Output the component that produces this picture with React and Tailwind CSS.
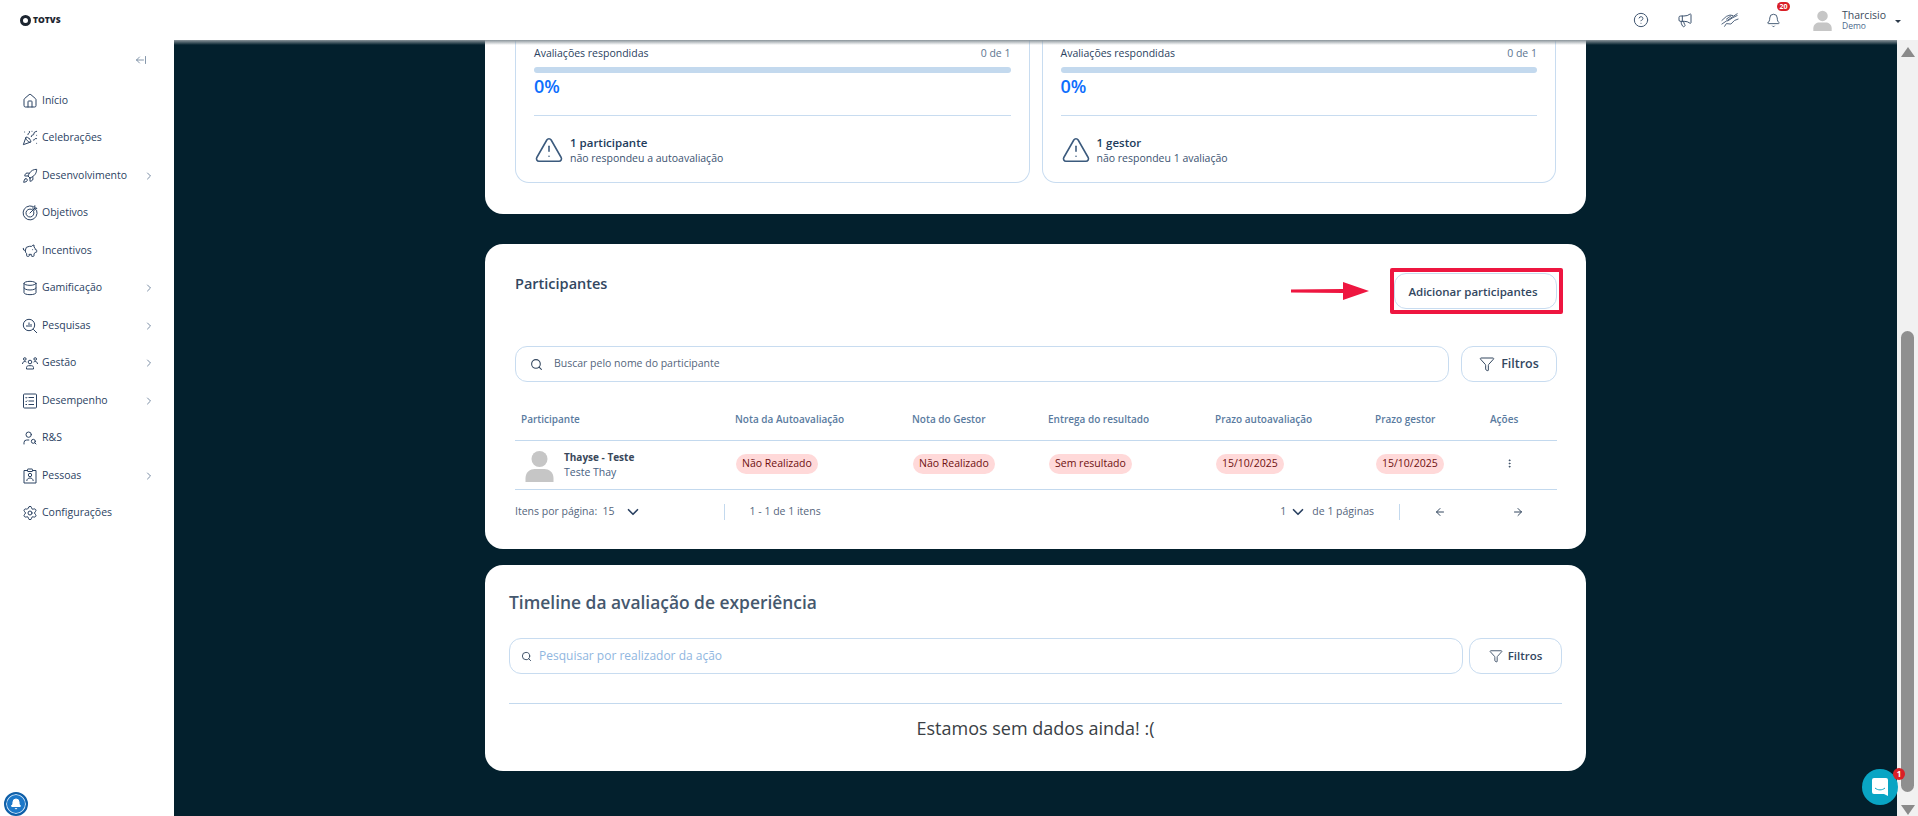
import {
  House, PartyPopper, Rocket, PiggyBank, Database, UserSearch, Settings, ChevronRight, ChevronDown,
  CircleHelp, Megaphone, Bell, Search, Funnel, TriangleAlert, ArrowLeft, ArrowRight, EllipsisVertical, ArrowLeftFromLine,
} from 'lucide-react';

function ObjetivoIcon(props) {
  return (
    <svg viewBox="0 0 16 16" fill="none" stroke="currentColor" strokeWidth="1" strokeLinecap="round" {...props}>
      <path d="M10.500 1.300A7 7 0 1 0 14.700 5.500" />
      <path d="M9.500 4.300A4 4 0 1 0 11.700 6.500" />
      <path d="M8 8l5-5M11 2.800V5h2.200L15 3.200h-2.200V1z" />
    </svg>
  );
}

function PesquisaIcon(props) {
  return (
    <svg viewBox="0 0 16 16" fill="none" stroke="currentColor" strokeWidth="1" {...props}>
      <circle cx="7" cy="7" r="5.700" />
      <path d="M11.200 11.200 15 15M5 9V7M7 9V4.500M9 9V6" />
    </svg>
  );
}

function GestaoIcon(props) {
  return (
    <svg viewBox="0 0 16 16" fill="none" stroke="currentColor" strokeWidth="1" {...props}>
      <circle cx="8" cy="7" r="1.800" />
      <path d="M4.500 14v-1.500c0-1 1-1.800 2-1.800h3c1 0 2 .8 2 1.800V14z" />
      <circle cx="2.800" cy="4" r="1.300" />
      <circle cx="13.200" cy="4" r="1.300" />
      <path d="M.5 9c0-1.500 1-2.500 2.300-2.500.7 0 1.200.2 1.600.6M15.500 9c0-1.500-1-2.500-2.300-2.500-.7 0-1.200.2-1.600.6" />
    </svg>
  );
}

function DesempenhoIcon(props) {
  return (
    <svg viewBox="0 0 16 16" fill="none" stroke="currentColor" strokeWidth="1" {...props}>
      <rect x="1.500" y="1" width="13" height="14" rx="1" />
      <path d="M6.500 4.500H12M6.500 8H12M6.500 11.500H12M3.500 4.500l.7.7 1-1.200M3.500 8l.7.7 1-1.200M3.500 11.500h1.500" />
    </svg>
  );
}

function PessoasIcon(props) {
  return (
    <svg viewBox="0 0 16 16" fill="none" stroke="currentColor" strokeWidth="1" {...props}>
      <path d="M5.500 2.500H2v12.500h12V2.500h-3.500" />
      <rect x="5.500" y="1" width="5" height="2.500" rx="0.500" />
      <circle cx="8" cy="7" r="1.700" />
      <path d="M4.800 13c0-4 6.400-4 6.400 0" />
    </svg>
  );
}

function HandsIcon(props) {
  return (
    <svg viewBox="0 0 20 16" fill="none" stroke="currentColor" strokeWidth="1" strokeLinecap="round" {...props}>
      <path d="M1 8.500 6 4l4-1.500 3 .5M6 7l5-3.500M7.500 9 13 5.500l5-2.500M4 15l2-3 5 .5 4-4 4-1.500M1 12.500 18 1" />
    </svg>
  );
}

const navItems = [
  { label: 'Início', icon: House, stroke: 1.5 },
  { label: 'Celebrações', icon: PartyPopper, stroke: 1.5 },
  { label: 'Desenvolvimento', icon: Rocket, stroke: 1.5, sub: true },
  { label: 'Objetivos', icon: ObjetivoIcon },
  { label: 'Incentivos', icon: PiggyBank, stroke: 1.5 },
  { label: 'Gamificação', icon: Database, stroke: 1.5, sub: true },
  { label: 'Pesquisas', icon: PesquisaIcon, sub: true },
  { label: 'Gestão', icon: GestaoIcon, sub: true },
  { label: 'Desempenho', icon: DesempenhoIcon, sub: true },
  { label: 'R&S', icon: UserSearch, stroke: 1.5 },
  { label: 'Pessoas', icon: PessoasIcon, sub: true },
  { label: 'Configurações', icon: Settings, stroke: 1.5 },
];

const columns = ['Participante', 'Nota da Autoavaliação', 'Nota do Gestor', 'Entrega do resultado', 'Prazo autoavaliação', 'Prazo gestor', 'Ações'];
const gridCols = 'grid grid-cols-[215px_177px_136px_167px_160px_115px_1fr] items-center';

function Avatar({ className }) {
  return (
    <svg viewBox="0 0 28 32" className={className} fill="#c6c6c6">
      <circle cx="14" cy="9" r="8" />
      <path d="M0 32v-4c0-6 5-9 9-9h10c4 0 9 3 9 9v4z" />
    </svg>
  );
}

function Pill({ children }) {
  return <span className="mb-[3px] inline-flex h-5 items-center rounded-full bg-[#ffd9d9] px-[6px] text-[10.500px] text-[#6e1010]">{children}</span>;
}

function ProgressCard({ who, text }) {
  return (
    <div className="flex-1 h-full rounded-b-[14px] border border-t-0 border-[#c8dcf0] px-[18px]">
      <div className="flex h-[27px] items-center justify-between text-[10.500px]">
        <span className="text-[#2a4260]">Avaliações respondidas</span>
        <span className="text-[#5d7590]">0 de 1</span>
      </div>
      <div className="h-[6px] rounded-full bg-[#c3d9ee]" />
      <p className="mt-[1px] text-[18px] leading-[24px] font-semibold text-[#0d6efd]">0%</p>
      <div className="mt-[17px] border-t border-[#c8dcf0]" />
      <div className="mt-[18px] flex items-center gap-[6px]">
        <TriangleAlert className="h-[30px] w-[30px] text-[#3b5a7d]" strokeWidth={1.25} />
        <div className="pt-[1px]">
          <p className="text-[11.500px] leading-[16px] font-semibold text-[#223c5c]">{who}</p>
          <p className="text-[10.500px] leading-[15px] text-[#3b5270]">{text}</p>
        </div>
      </div>
    </div>
  );
}

export default function App() {
  return (
    <div className="relative flex h-[816px] w-[1918px] flex-col overflow-hidden bg-white font-['Open_Sans',sans-serif]">
      <header className="relative z-10 flex h-10 items-center justify-between bg-white pl-5 pr-[17px]">
        <div className="flex items-center gap-[2px]">
          <span className="h-[11px] w-[11px] rounded-full border-[3px] border-[#1c2530]" />
          <span className="text-[8.500px] leading-none font-extrabold text-[#1c2530]">TOTVS</span>
        </div>
        <div className="flex items-center text-[#3f5570]">
          <CircleHelp className="h-4 w-4" strokeWidth={1.5} />
          <Megaphone className="ml-[28px] h-4 w-4" strokeWidth={1.5} />
          <HandsIcon className="ml-[28px] h-[16px] w-[18px]" />
          <div className="relative ml-[27px]">
            <Bell className="h-[15px] w-[15px]" strokeWidth={1.5} />
            <span className="absolute -top-[11px] left-[11px] flex h-[9px] w-[13px] items-center justify-center rounded-full bg-[#d92027] text-[7px] leading-none font-bold text-white">20</span>
          </div>
          <Avatar className="ml-[32px] h-[21px] w-[19px]" />
          <div className="ml-[10px] w-[53px]">
            <p className="text-[10.500px] leading-[12px] text-[#3c4b5c]">Tharcisio</p>
            <p className="text-[8.500px] leading-[10px] text-[#4d6a8c]">Demo</p>
          </div>
          <span className="mt-[2px] h-0 w-0 border-x-[3px] border-t-[3px] border-x-transparent border-t-[#2c3a4a]" />
        </div>
      </header>

      <div className="flex min-h-0 flex-1">
        <aside className="flex w-[174px] shrink-0 flex-col bg-white">
          <div className="flex h-[42px] items-start justify-end pt-[14px] pr-[27px] text-[#5d7590]">
            <ArrowLeftFromLine className="h-3 w-3" strokeWidth={1.5} />
          </div>
          <nav>
            {navItems.map(item => (
              <div key={item.label} className="flex h-[37.500px] items-center pl-[22px] pr-[22px] text-[#2b4262]">
                <item.icon className="h-4 w-4 shrink-0" strokeWidth={item.stroke ?? 1} />
                <span className="ml-[4px] flex-1 text-[10.500px]">{item.label}</span>
                {item.sub && <ChevronRight className="-mr-[3px] h-[12px] w-[12px] text-[#4d6785]" strokeWidth={1.5} />}
              </div>
            ))}
          </nav>
          <div className="mt-auto ml-[4px] flex h-6 w-6 items-center justify-center rounded-full border-2 border-[#0f5fa8] bg-[#1c78c9] shadow-[inset_0_0_0_1px_#cfe3f5]">
            <Bell className="h-[12px] w-[12px] fill-white text-white" />
          </div>
        </aside>

        <main className="relative flex min-w-0 flex-1 flex-col items-center bg-[#03202d]">
          <div className="absolute inset-x-0 top-0 h-[5px] bg-gradient-to-b from-[#8a949a] to-transparent" />
          <section className="h-[174px] w-[1101px] shrink-0 rounded-b-[18px] bg-white px-[30px] pb-[31px]">
            <div className="flex h-full gap-[12px]">
              <ProgressCard who="1 participante" text="não respondeu a autoavaliação" />
              <ProgressCard who="1 gestor" text="não respondeu 1 avaliação" />
            </div>
          </section>

          <section className="mt-[30px] h-[305px] w-[1101px] shrink-0 rounded-[18px] bg-white pr-[29px] pl-[30px]">
            <div className="flex h-[102px] items-start justify-between">
              <h2 className="mt-[30px] text-[14.500px] leading-5 font-semibold text-[#33475f]">Participantes</h2>
              <div className="mt-[24px] -mr-[6px] flex items-center">
                <svg viewBox="0 0 78 18" className="mr-[21px] h-[18px] w-[78px]" fill="#ee1640">
                  <path d="M0 7.500 52 7v-7l26 9-26 9v-7l-52-.5a1.700 1.700 0 0 1 0-3.500z" />
                </svg>
                <div className="rounded-[2px] border-4 border-[#ee1640] py-[1px] pr-[2px]">
                  <button className="h-[36px] w-[163px] rounded-[12px] border border-[#c8dcf0] bg-white pt-[1px] pr-[5px] text-[11.500px] font-semibold text-[#33475f]">Adicionar participantes</button>
                </div>
              </div>
            </div>

            <div className="flex gap-3">
              <div className="flex h-[36px] flex-1 items-center rounded-[12px] border border-[#c8dcf0] pl-[14px]">
                <Search className="h-[13px] w-[13px] text-[#33475f]" strokeWidth={2} />
                <span className="ml-[11px] text-[10.500px] text-[#54657c]">Buscar pelo nome do participante</span>
              </div>
              <button className="flex h-[36px] w-[96px] items-center justify-center gap-[6px] rounded-[12px] border border-[#c8dcf0] text-[12.500px] font-semibold text-[#33475f]">
                <Funnel className="h-4 w-4" strokeWidth={1.5} />
                Filtros
              </button>
            </div>

            <div className={`${gridCols} mt-[13px] h-[46px] border-b border-[#c3d9ee] pt-[4px] pl-[5px] text-[10px] font-semibold text-[#5a7ba0]`}>
              {columns.map(col => <span key={col} className="first:pl-[1px]">{col}</span>)}
            </div>
            <div className={`${gridCols} h-[49px] border-b border-[#c3d9ee] pl-[6px]`}>
              <div className="flex items-center">
                <Avatar className="mt-[2px] ml-[4px] h-[32px] w-[29px]" />
                <div className="ml-[10px]">
                  <p className="text-[10px] leading-[15px] font-bold text-[#39475a]">Thayse - Teste</p>
                  <p className="text-[10.500px] leading-[15px] text-[#46607f]">Teste Thay</p>
                </div>
              </div>
              <div className="flex"><Pill>Não Realizado</Pill></div>
              <div className="flex"><Pill>Não Realizado</Pill></div>
              <div className="flex"><Pill>Sem resultado</Pill></div>
              <div className="flex"><Pill>15/10/2025</Pill></div>
              <div className="flex"><Pill>15/10/2025</Pill></div>
              <EllipsisVertical className="mb-[3px] ml-[13px] h-[11px] w-[11px] text-[#33475f]" strokeWidth={2} />
            </div>

            <div className="mt-[13px] flex h-[18px] items-center text-[10.500px] text-[#54657c]">
              <span>Itens por página:&nbsp; 15</span>
              <ChevronDown className="ml-[9px] h-[18px] w-[18px] text-[#2b4262]" strokeWidth={2.25} />
              <span className="ml-[82px] h-[16px] border-l border-[#c3d9ee]" />
              <span className="ml-[25px] text-[10.500px]">1 - 1 de 1 itens</span>
              <span className="ml-auto">1</span>
              <ChevronDown className="ml-[3px] h-[18px] w-[18px] text-[#2b4262]" strokeWidth={2.25} />
              <span className="ml-[5px]">de 1 páginas</span>
              <span className="ml-[25px] h-[16px] border-l border-[#c3d9ee]" />
              <ArrowLeft className="ml-[34px] h-[12px] w-[12px] text-[#33475f]" strokeWidth={2} />
              <ArrowRight className="mr-[33px] ml-[66px] h-[12px] w-[12px] text-[#33475f]" strokeWidth={2} />
            </div>
          </section>

          <section className="mt-[16px] h-[206px] w-[1101px] shrink-0 rounded-[18px] bg-white px-6">
            <h2 className="pt-[24px] text-[17.400px] leading-[26px] font-semibold text-[#45586e]">Timeline da avaliação de experiência</h2>
            <div className="mt-[23px] flex gap-[6px]">
              <div className="flex h-[36px] flex-1 items-center rounded-[12px] border border-[#c8dcf0] pl-[11px]">
                <Search className="h-[11px] w-[11px] text-[#33475f]" strokeWidth={2} />
                <span className="ml-[7px] text-[12px] text-[#8fb6e0]">Pesquisar por realizador da ação</span>
              </div>
              <button className="flex h-[36px] w-[93px] items-center justify-center gap-[5px] rounded-[12px] border border-[#c8dcf0] text-[11.500px] font-semibold text-[#33475f]">
                <Funnel className="h-[14px] w-[14px]" strokeWidth={1.5} />
                Filtros
              </button>
            </div>
            <div className="mt-[29px] border-t border-[#c3d9ee]" />
            <p className="mt-[12px] text-center text-[18px] leading-6 text-[#3a3f45]">Estamos sem dados ainda! :(</p>
          </section>
        </main>

        <div className="flex w-[21px] shrink-0 flex-col items-center bg-[#f1f1f1] pt-[7px] pb-[1px]">
          <span className="h-0 w-0 border-x-[7px] border-b-[10px] border-x-transparent border-b-[#8a8a8a]" />
          <div className="mt-[274px] w-[13px] flex-1 rounded-full bg-[#8f8f8f]" />
          <span className="mt-[13px] h-0 w-0 border-x-[7px] border-t-[10px] border-x-transparent border-t-[#8a8a8a]" />
        </div>
      </div>

      <div className="absolute top-[769px] left-[1862px] flex h-9 w-9 items-center justify-center rounded-full bg-[#09a5c4]">
        <svg viewBox="0 0 16 18" className="h-[18px] w-4">
          <path d="M2 0h12a2 2 0 0 1 2 2v16l-4-2H2a2 2 0 0 1-2-2V2a2 2 0 0 1 2-2z" fill="#fff" />
          <path d="M3 10c3 2.500 7 2.500 10 0" fill="none" stroke="#09a5c4" strokeWidth="1" />
        </svg>
        <span className="absolute -top-[1px] -right-[7px] flex h-3 w-3 items-center justify-center rounded-full bg-[#d92027] text-[8px] leading-none font-bold text-white">1</span>
      </div>
    </div>
  );
}
